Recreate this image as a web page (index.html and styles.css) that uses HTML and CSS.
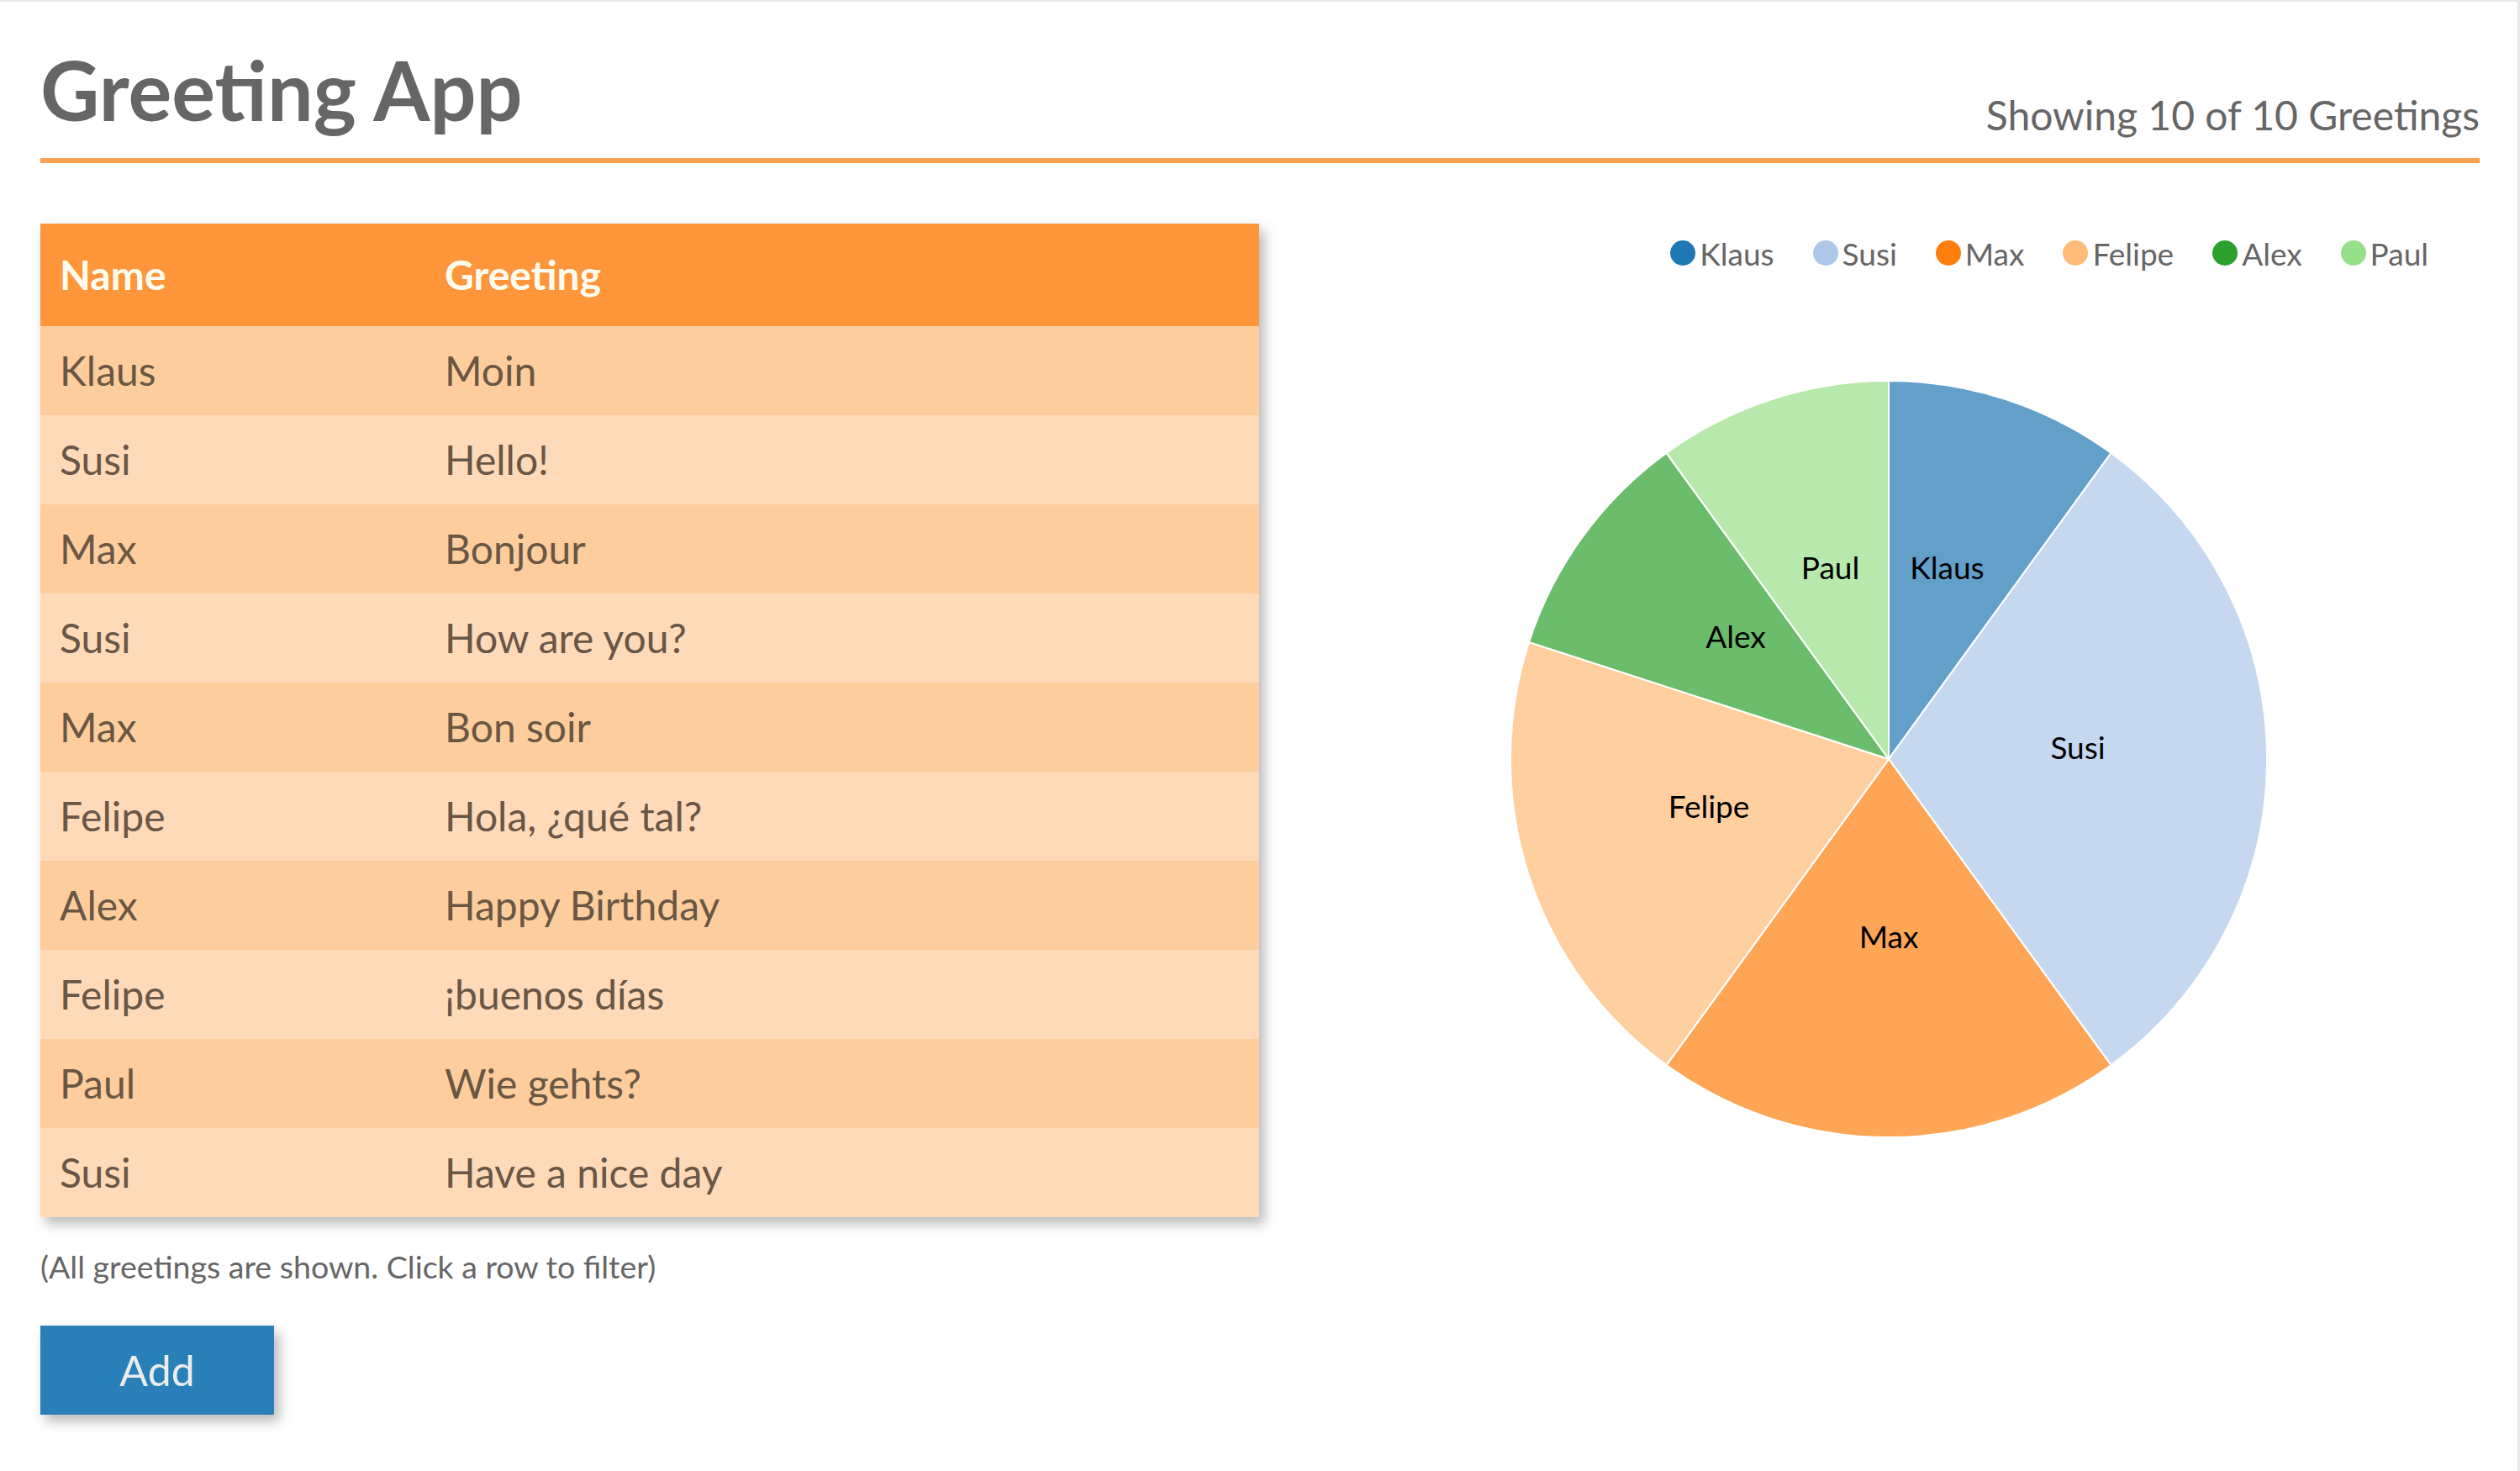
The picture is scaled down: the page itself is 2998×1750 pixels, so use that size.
FILE: index.html
```html
<!DOCTYPE html>
<html lang="en">
<head>
<meta charset="utf-8">
<title>Greeting App</title>
<link rel="stylesheet" href="styles.css">
</head>
<body>
<div class="app">
  <header class="app-header">
    <h1 class="app-title">Greeting App</h1>
    <div class="app-count">Showing 10 of 10 Greetings</div>
  </header>
  <main class="app-main">
    <section class="list-col">
      <table class="greetings">
        <thead>
          <tr><th class="col-name">Name</th><th>Greeting</th></tr>
        </thead>
        <tbody>
          <tr><td>Klaus</td><td>Moin</td></tr>
          <tr><td>Susi</td><td>Hello!</td></tr>
          <tr><td>Max</td><td>Bonjour</td></tr>
          <tr><td>Susi</td><td>How are you?</td></tr>
          <tr><td>Max</td><td>Bon soir</td></tr>
          <tr><td>Felipe</td><td>Hola, ¿qué tal?</td></tr>
          <tr><td>Alex</td><td>Happy Birthday</td></tr>
          <tr><td>Felipe</td><td>¡buenos días</td></tr>
          <tr><td>Paul</td><td>Wie gehts?</td></tr>
          <tr><td>Susi</td><td>Have a nice day</td></tr>
        </tbody>
      </table>
      <p class="hint">(All greetings are shown. Click a row to filter)</p>
      <button class="add-btn" type="button">Add</button>
    </section>
    <section class="chart-col">
      <ul class="legend">
        <li class="legend-item"><span class="dot dot-klaus"></span>Klaus</li>
        <li class="legend-item"><span class="dot dot-susi"></span>Susi</li>
        <li class="legend-item"><span class="dot dot-max"></span>Max</li>
        <li class="legend-item"><span class="dot dot-felipe"></span>Felipe</li>
        <li class="legend-item"><span class="dot dot-alex"></span>Alex</li>
        <li class="legend-item"><span class="dot dot-paul"></span>Paul</li>
      </ul>
      <svg class="pie" width="1451" height="1040" viewBox="0 0 1451 1040">
        <g class="slices">
          <path class="slice s-klaus" d="M748,580 L748,130 A450,450 0 0,1 1012.5,215.94 Z"/>
          <path class="slice s-susi" d="M748,580 L1012.5,215.94 A450,450 0 0,1 1012.5,944.06 Z"/>
          <path class="slice s-max" d="M748,580 L1012.5,944.06 A450,450 0 0,1 483.5,944.06 Z"/>
          <path class="slice s-felipe" d="M748,580 L483.5,944.06 A450,450 0 0,1 320.02,440.94 Z"/>
          <path class="slice s-alex" d="M748,580 L320.02,440.94 A450,450 0 0,1 483.5,215.94 Z"/>
          <path class="slice s-paul" d="M748,580 L483.5,215.94 A450,450 0 0,1 748,130 Z"/>
        </g>
        <g class="labels">
          <text x="817.5" y="366">Klaus</text>
          <text x="973" y="580">Susi</text>
          <text x="748" y="805">Max</text>
          <text x="534" y="649.5">Felipe</text>
          <text x="566" y="447.75">Alex</text>
          <text x="678.5" y="366">Paul</text>
        </g>
      </svg>
    </section>
  </main>
</div>
</body>
</html>
```
FILE: styles.css
```css
* {
  box-sizing: border-box;
}

html, body {
  margin: 0;
  padding: 0;
  background: #ffffff;
}

body {
  font-family: Lato, "Open Sans", "Liberation Sans", sans-serif;
  color: #666666;
  border-top: 2px solid #e6e6e6;
  border-right: 3px solid #e6e6e6;
  min-height: 1750px;
}

.app {
  width: 2902px;
  margin-left: 48px;
}

.app-header {
  display: flex;
  justify-content: space-between;
  align-items: flex-end;
  padding-top: 46px;
  padding-bottom: 23px;
  border-bottom: 6px solid #ffa150;
}

.app-title {
  margin: 0;
  font-size: 97px;
  font-weight: 700;
  line-height: normal;
  color: #666666;
}

.app-count {
  font-size: 48px;
  line-height: normal;
  color: #666666;
}

.app-main {
  display: grid;
  grid-template-columns: 1fr 1fr;
  margin-top: 72px;
}

.list-col {
  display: flex;
  flex-direction: column;
  align-items: flex-start;
}

.greetings {
  width: 1450px;
  border-collapse: collapse;
  box-shadow: 6px 8px 14px rgba(0, 0, 0, 0.28);
  font-size: 48px;
}

.greetings th,
.greetings td {
  text-align: left;
  padding: 24px 24px 24px 23px;
  line-height: 58px;
}

.greetings th {
  background: #ff963b;
  color: #fffdf0;
  font-weight: 700;
  padding-top: 32px;
  padding-bottom: 32px;
}

.greetings .col-name {
  width: 458px;
}

.greetings td {
  color: #6a5644;
}

.greetings tbody tr:nth-child(odd) td {
  background: #fecd9e;
}

.greetings tbody tr:nth-child(even) td {
  background: #fedab9;
}

.hint {
  margin: 36px 0 0;
  font-size: 37.5px;
  line-height: normal;
  color: #666666;
}

.add-btn {
  margin-top: 48px;
  width: 278px;
  height: 106px;
  border: none;
  padding: 0;
  background: #2980b9;
  color: #ececec;
  font-family: Lato, "Open Sans", "Liberation Sans", sans-serif;
  font-size: 50px;
  line-height: normal;
  box-shadow: 6px 8px 14px rgba(0, 0, 0, 0.28);
  cursor: pointer;
}

.chart-col {
  display: flex;
  flex-direction: column;
}

.legend {
  list-style: none;
  margin: 15px 0 0;
  padding: 0 61px 0 0;
  height: 40px;
  display: flex;
  justify-content: flex-end;
  align-items: center;
  gap: 46px;
  font-size: 37px;
  color: #666666;
}

.legend-item {
  display: flex;
  align-items: center;
  gap: 5px;
}

.dot {
  display: inline-block;
  width: 30px;
  height: 30px;
  border-radius: 50%;
}

.dot-klaus { background: #1f77b4; }
.dot-susi { background: #aec7e8; }
.dot-max { background: #ff7f0e; }
.dot-felipe { background: #ffbb78; }
.dot-alex { background: #2ca02c; }
.dot-paul { background: #98df8a; }

.pie {
  display: block;
  margin-top: 2px;
}

.slice {
  stroke: #ffffff;
  stroke-width: 2;
  fill-opacity: 0.7;
}

.s-klaus { fill: #1f77b4; }
.s-susi { fill: #aec7e8; }
.s-max { fill: #ff7f0e; }
.s-felipe { fill: #ffbb78; }
.s-alex { fill: #2ca02c; }
.s-paul { fill: #98df8a; }

.labels text {
  font-family: Lato, "Open Sans", "Liberation Sans", sans-serif;
  font-size: 37px;
  fill: #000000;
  text-anchor: middle;
}
```
